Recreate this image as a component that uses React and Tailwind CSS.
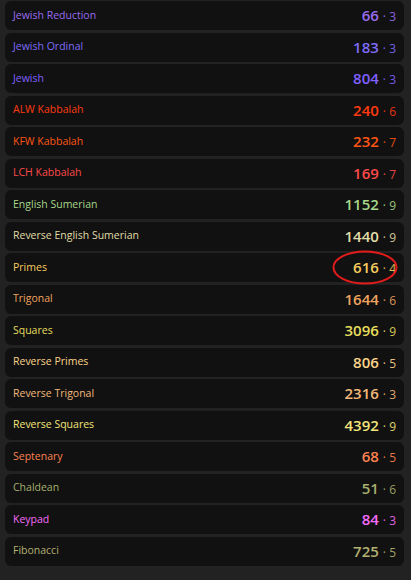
const rows = [
  { name: 'Jewish Reduction', value: 66, root: 3, color: 'text-[#9a6cf0]' },
  { name: 'Jewish Ordinal', value: 183, root: 3, color: 'text-[#7f6cf8]' },
  { name: 'Jewish', value: 804, root: 3, color: 'text-[#8060ff]' },
  { name: 'ALW Kabbalah', value: 240, root: 6, color: 'text-[#ff3a10]' },
  { name: 'KFW Kabbalah', value: 232, root: 7, color: 'text-[#ff5514]' },
  { name: 'LCH Kabbalah', value: 169, root: 7, color: 'text-[#ff4a4a]' },
  { name: 'English Sumerian', value: 1152, root: 9, color: 'text-[#a8d68a]' },
  { name: 'Reverse English Sumerian', value: 1440, root: 9, color: 'text-[#e0dca8]' },
  { name: 'Primes', value: 616, root: 4, color: 'text-[#f7cc5e]' },
  { name: 'Trigonal', value: 1644, root: 6, color: 'text-[#eea35e]' },
  { name: 'Squares', value: 3096, root: 9, color: 'text-[#e6de5c]' },
  { name: 'Reverse Primes', value: 806, root: 5, color: 'text-[#fbd38a]' },
  { name: 'Reverse Trigonal', value: 2316, root: 3, color: 'text-[#f2b87a]' },
  { name: 'Reverse Squares', value: 4392, root: 9, color: 'text-[#f3e47a]' },
  { name: 'Septenary', value: 68, root: 5, color: 'text-[#fb8250]' },
  { name: 'Chaldean', value: 51, root: 6, color: 'text-[#a7af6e]' },
  { name: 'Keypad', value: 84, root: 3, color: 'text-[#f56cf8]' },
  { name: 'Fibonacci', value: 725, root: 5, color: 'text-[#b3b072]' },
];

function CipherRow({ name, value, root, color, circled }) {
  return (
    <div className="relative h-[29px] flex items-center justify-between px-2 rounded-md bg-[#111111]">
      <span className={`text-[10.5px] font-medium ${color}`}>{name}</span>
      <span className={`flex items-baseline ${color}`}>
        <span className="text-[15px] font-semibold">{value}</span>
        <span className="text-[12px] opacity-90 ml-[4px]">· {root}</span>
      </span>
      {circled && (
        <svg className="absolute right-[6px] top-[-3px]" width="66" height="35" viewBox="0 0 66 35">
          <ellipse cx="33" cy="17.5" rx="31.5" ry="16" fill="none" stroke="#e21b1b" strokeWidth="2" />
        </svg>
      )}
    </div>
  );
}

export default function App() {
  return (
    <div className="w-[411px] h-[580px] bg-[#222222] px-[5px] pt-[1px] overflow-hidden" style={{ fontFamily: '"Open Sans", "Noto Sans", sans-serif' }}>
      <div className="flex flex-col gap-[2.5px] w-[399px]">
        {rows.map((r) => (
          <CipherRow key={r.name} {...r} circled={r.name === 'Primes'} />
        ))}
      </div>
    </div>
  );
}
